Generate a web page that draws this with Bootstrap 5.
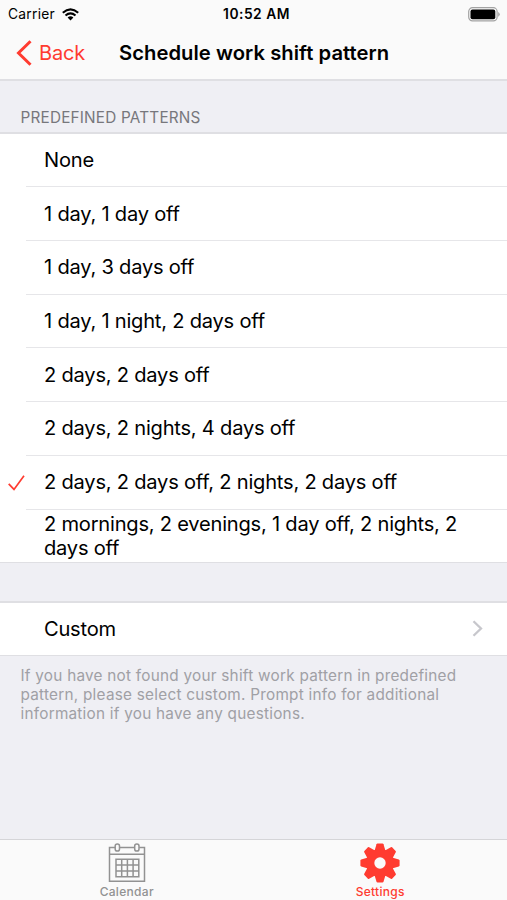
<!DOCTYPE html>
<html lang="en">
<head>
<meta charset="utf-8">
<meta name="viewport" content="width=device-width, initial-scale=1">
<title>Schedule work shift pattern</title>
<link href="https://cdn.jsdelivr.net/npm/bootstrap@5.3.0/dist/css/bootstrap.min.css" rel="stylesheet">
<style>
body{font-family:Inter,"Liberation Sans",sans-serif;background:#efeff4;color:#000;height:900px;overflow:hidden}
svg{display:block;flex:none}
.bar-bg{background:#fafafa}
.accent{color:#ff3b30}
.status{height:27px;font-size:13.8px;letter-spacing:.25px;padding:1px 7px 0 8px}
.status .side{flex:1 1 0}
.wifi{margin-left:7px}
.clock{font-weight:600;font-size:13.8px;letter-spacing:.5px;padding-left:5px}
.top-nav{height:54px;padding:0 0 1px 16px;border-bottom:2px solid #dfdfe3}
.back-link{font-size:20px;width:103px;gap:7px;letter-spacing:-.2px}
.heading{font-size:20.2px;font-weight:600;letter-spacing:.06px;padding-top:1px}
.section-label{height:51px;padding:26px 0 0 20.5px;font-size:15.3px;letter-spacing:.2px;line-height:22px;color:#77777c}
.patterns{border-top:2px solid #dfdfe3;border-bottom:1px solid #dfdfe3;border-radius:0}
.patterns .list-group-item{height:53.7px;padding:0;border:0;color:#000;font-size:20.1px;line-height:24px;letter-spacing:-.22px}
.patterns .list-group-item:first-child{height:53.4px}
.patterns .list-group-item:last-child{height:52.4px}
.patterns.one-row .list-group-item{height:52px}
.tick{width:26px;padding-left:8px}
.label-cell{padding-left:18px;padding-right:30px;border-bottom:1px solid #e6e6e9}
.list-group-item:last-child .label-cell{border-bottom:0}
.patterns.one-row{margin-top:38px}
.note{padding:10px 20px 0 20.5px;font-size:15.3px;letter-spacing:.25px;line-height:19px;color:#a0a0a5}
.tabs{height:61px;border-top:1px solid #d5d5d8;font-size:12px;font-weight:500;letter-spacing:.3px;line-height:14px;color:#929292;padding-top:3px}
.tabs a{gap:2px}
</style>
</head>
<body class="d-flex flex-column">
<header class="bar-bg">
  <div class="status d-flex align-items-center">
    <div class="side d-flex align-items-center"><span>Carrier</span>
      <svg class="wifi" width="17" height="13" viewBox="0 0 17 13" fill="none" stroke="#000" stroke-width="2.1"><path d="M.8 4.7Q8.5-2 16.2 4.7M3.500 7.500Q8.500 3.200 13.500 7.500"/><path d="M5.600 9.400Q8.500 7 11.400 9.400L8.500 12.500Z" fill="#000" stroke="none"/></svg>
    </div>
    <span class="clock">10:52 AM</span>
    <div class="side d-flex justify-content-end">
      <svg width="32" height="15" viewBox="0 0 32 15"><rect x=".7" y=".7" width="28.4" height="13.2" rx="3.8" fill="none" stroke="#a3a3a3" stroke-width="1.2"/><rect x="2.5" y="2.5" width="24.8" height="9.7" rx="2"/><path d="M30.2 5v4.700q1.500-.6 1.500-2.350T30.200 5Z" fill="#a3a3a3"/></svg>
    </div>
  </div>
  <nav class="top-nav d-flex align-items-center">
    <a href="#" class="back-link accent text-decoration-none d-flex align-items-center">
      <svg width="16" height="26" viewBox="0 0 16 26" fill="none" stroke="currentColor" stroke-width="3"><path d="M14.500 1.200 2.500 13l12 11.800"/></svg>Back</a>
    <h1 class="heading mb-0">Schedule work shift pattern</h1>
  </nav>
</header>
<main class="flex-grow-1">
  <h2 class="section-label mb-0 fw-normal">PREDEFINED PATTERNS</h2>
  <div class="list-group patterns">
    <div class="list-group-item d-flex"><span class="tick"></span><span class="label-cell flex-grow-1 d-flex align-items-center">None</span></div>
    <div class="list-group-item d-flex"><span class="tick"></span><span class="label-cell flex-grow-1 d-flex align-items-center">1 day, 1 day off</span></div>
    <div class="list-group-item d-flex"><span class="tick"></span><span class="label-cell flex-grow-1 d-flex align-items-center">1 day, 3 days off</span></div>
    <div class="list-group-item d-flex"><span class="tick"></span><span class="label-cell flex-grow-1 d-flex align-items-center">1 day, 1 night, 2 days off</span></div>
    <div class="list-group-item d-flex"><span class="tick"></span><span class="label-cell flex-grow-1 d-flex align-items-center">2 days, 2 days off</span></div>
    <div class="list-group-item d-flex"><span class="tick"></span><span class="label-cell flex-grow-1 d-flex align-items-center">2 days, 2 nights, 4 days off</span></div>
    <div class="list-group-item d-flex"><span class="tick accent d-flex align-items-center"><svg width="17" height="16" viewBox="0 0 17 16" fill="none" stroke="currentColor" stroke-width="1.7"><path d="M.7 8.800 6 14.400 16 .7"/></svg></span><span class="label-cell flex-grow-1 d-flex align-items-center">2 days, 2 days off, 2 nights, 2 days off</span></div>
    <div class="list-group-item d-flex"><span class="tick flex-shrink-0"></span><span class="label-cell flex-grow-1 d-flex align-items-center">2 mornings, 2 evenings, 1 day off, 2 nights, 2 days off</span></div>
  </div>
  <div class="list-group patterns one-row">
    <a href="#" class="list-group-item d-flex"><span class="tick"></span><span class="label-cell flex-grow-1 d-flex align-items-center justify-content-between pe-4">Custom
      <svg width="11" height="17" viewBox="0 0 11 17" fill="none" stroke="#c7c7cc" stroke-width="2.3"><path d="M1.500 1.200 9 8.500l-7.500 7.300"/></svg></span></a>
  </div>
  <p class="note mb-0">If you have not found your shift work pattern in predefined pattern, please select custom. Prompt info for additional information if you have any questions.</p>
</main>
<footer class="tabs bar-bg d-flex">
  <a href="#" class="w-50 d-flex flex-column align-items-center text-reset text-decoration-none">
    <svg width="38" height="40" viewBox="0 0 38 40" fill="none" stroke="currentColor" stroke-width="1.5"><path d="M7 4.500H1.500V38.200H36.500V4.500H31.200M11.700 4.500H26.500M1.500 11.300H36.500"/><rect x="7.200" y=".9" width="4.300" height="7.200" rx="2.100"/><rect x="26.700" y=".9" width="4.300" height="7.200" rx="2.100"/><path d="M8 16.300H30.800V33.700H8ZM13.700 16.300v17.400M19.400 16.300v17.400M25.100 16.300v17.400M8 22.100h22.800M8 27.900h22.800"/></svg>Calendar</a>
  <a href="#" class="w-50 accent d-flex flex-column align-items-center text-decoration-none">
    <svg width="40" height="40" viewBox="-20 -20 40 40" fill="currentColor"><g id="teeth"><path d="M-5.500-12-3.500-18.800Q-3.200-19.600-2.500-19.600H2.500Q3.200-19.600 3.500-18.800L5.500-12V12L3.500 18.800Q3.200 19.600 2.500 19.600H-2.500Q-3.200 19.600-3.500 18.800L-5.500 12Z"/></g><use href="#teeth" transform="rotate(45)"/><use href="#teeth" transform="rotate(90)"/><use href="#teeth" transform="rotate(135)"/><circle r="14"/><circle r="5.700" fill="#fafafa"/></svg>Settings</a>
</footer>
<script src="https://cdn.jsdelivr.net/npm/bootstrap@5.3.0/dist/js/bootstrap.bundle.min.js"></script>
</body>
</html>
